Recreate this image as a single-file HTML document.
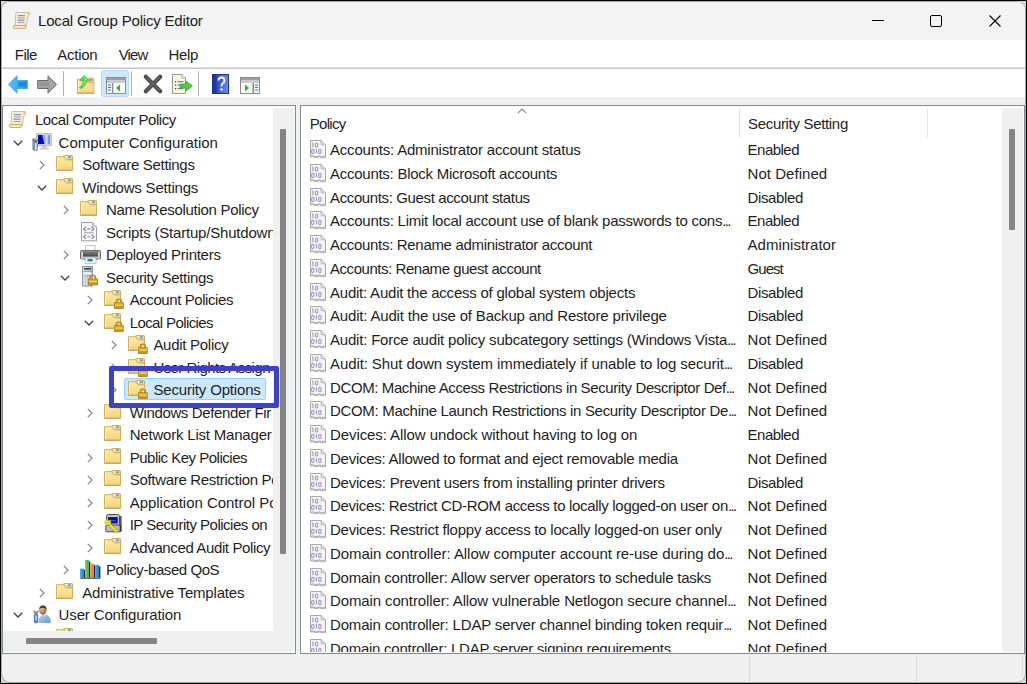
<!DOCTYPE html><html><head><meta charset="utf-8"><style>

*{box-sizing:border-box}
html,body{margin:0;padding:0;width:1027px;height:684px;overflow:hidden;background:#000}
.t{position:absolute;font-family:"Liberation Sans", sans-serif;font-size:15px;line-height:20px;color:#1e1e1e;white-space:nowrap}
.ic{position:absolute;overflow:visible}
.abs{position:absolute}
.el{letter-spacing:-1.6px}
#win{position:absolute;left:1px;top:1px;width:1025px;height:682px;background:#f0f0f0;border-radius:9px;overflow:hidden;border:1px solid #a6a6a6}

</style></head><body>

<svg width="0" height="0" style="position:absolute">
<defs>
 <linearGradient id="gFold" x1="0" y1="0" x2="0" y2="1"><stop offset="0" stop-color="#fdeaa6"/><stop offset="1" stop-color="#f3d47c"/></linearGradient>
 <linearGradient id="gLock" x1="0" y1="0" x2="0" y2="1"><stop offset="0" stop-color="#e0b838"/><stop offset="1" stop-color="#b88c1c"/></linearGradient>
 <linearGradient id="gScroll" x1="0" y1="0" x2="1" y2="0"><stop offset="0" stop-color="#f6f0d8"/><stop offset="1" stop-color="#fbefb2"/></linearGradient>
 <linearGradient id="gBlue" x1="0" y1="0" x2="1" y2="1"><stop offset="0" stop-color="#0000c8"/><stop offset=".45" stop-color="#0a22d8"/><stop offset=".55" stop-color="#b8c8ff"/><stop offset="1" stop-color="#3a5cf0"/></linearGradient>
 <linearGradient id="gArrowB" x1="0" y1="0" x2="1" y2="0"><stop offset="0" stop-color="#5cc4ff"/><stop offset=".5" stop-color="#34b0f8"/><stop offset="1" stop-color="#2a8ee0"/></linearGradient>
 <linearGradient id="gArrowG" x1="0" y1="0" x2="0" y2="1"><stop offset="0" stop-color="#a8a8a8"/><stop offset="1" stop-color="#6a6a6a"/></linearGradient>
 <linearGradient id="gHelp" x1="0" y1="0" x2="1" y2="0"><stop offset="0" stop-color="#2840a8"/><stop offset=".3" stop-color="#3450c0"/><stop offset="1" stop-color="#6c8cf0"/></linearGradient>
 <linearGradient id="gScreen" x1="0" y1="0" x2="1" y2="0"><stop offset="0" stop-color="#1020e0"/><stop offset=".5" stop-color="#8aa0ff"/><stop offset=".75" stop-color="#d8e0ff"/><stop offset="1" stop-color="#4060f0"/></linearGradient>
 <linearGradient id="gPrn" x1="0" y1="0" x2="0" y2="1"><stop offset="0" stop-color="#808080"/><stop offset="1" stop-color="#484848"/></linearGradient>
 <linearGradient id="gTower" x1="0" y1="0" x2="1" y2="0"><stop offset="0" stop-color="#dfe6ea"/><stop offset="1" stop-color="#a9b3ba"/></linearGradient>
 <linearGradient id="gBarB" x1="0" y1="0" x2="1" y2="0"><stop offset="0" stop-color="#48b4f8"/><stop offset="1" stop-color="#1a78d0"/></linearGradient>
 <linearGradient id="gBarG" x1="0" y1="0" x2="1" y2="0"><stop offset="0" stop-color="#7ee070"/><stop offset="1" stop-color="#30a838"/></linearGradient>
 <linearGradient id="gBarO" x1="0" y1="0" x2="1" y2="0"><stop offset="0" stop-color="#ffa070"/><stop offset="1" stop-color="#e86838"/></linearGradient>
 <linearGradient id="gShirt" x1="0" y1="0" x2="1" y2="1"><stop offset="0" stop-color="#b8dcf8"/><stop offset="1" stop-color="#5a98d8"/></linearGradient>
 <radialGradient id="gSkin" cx=".35" cy=".35" r=".7"><stop offset="0" stop-color="#f0c090"/><stop offset="1" stop-color="#9a6030"/></radialGradient>
</defs>
<symbol id="folder" viewBox="0 0 17 16">
 <path d="M0.5 1.7 H7.6 Q8.3 1.7 8.7 2.4 L9.6 4.1 Q10 4.7 10.8 4.7 H16.5 V15.5 H0.5 Z" fill="url(#gFold)" stroke="#d0ae5c" stroke-width="1"/>
 <path d="M7.4 1.3 Q7.5 0.5 8.4 0.5 H15.8 Q16.5 0.5 16.5 1.2 V4.7 H10.8 Q10 4.7 9.6 4.1 L8.7 2.4 Q8.3 1.7 7.6 1.7 Z" fill="#f2da94" stroke="#cfac5a" stroke-width="1"/>
 <rect x="9.8" y="1.3" width="1.8" height="1.9" fill="#fbf8ee"/>
 <rect x="11.8" y="1.3" width="3.2" height="1.9" fill="#6fa2d8"/>
 <rect x="1" y="2.2" width="1" height="12.8" fill="#fff4c4" opacity=".8"/>
 <rect x="0.5" y="14.6" width="16" height="1" fill="#c9a458"/>
</symbol>
<symbol id="lock" viewBox="0 0 10 11">
 <path d="M2.6 5 V3.3 Q2.6 0.9 5 0.9 Q7.4 0.9 7.4 3.3 V5" fill="none" stroke="#b48c2c" stroke-width="1.9"/>
 <path d="M3.3 5 V3.4 Q3.3 1.7 5 1.7 Q6.7 1.7 6.7 3.4 V5" fill="none" stroke="#e2c470" stroke-width="0.5"/>
 <rect x="0.4" y="4.6" width="9.2" height="6" fill="url(#gLock)" stroke="#a87c14" stroke-width="0.8"/>
 <rect x="0.8" y="6.6" width="8.4" height="1.1" fill="#f6dc60"/>
 <rect x="0.8" y="9" width="8.4" height="0.9" fill="#c89a22"/>
</symbol>
<symbol id="scroll" viewBox="0 0 19 19">
 <path d="M4 1.5 H16.5 Q18.5 1.5 17.5 3.5 L16.5 3.5 L14 15 H3 Z" fill="url(#gScroll)" stroke="#c8c0a0" stroke-width="1"/>
 <path d="M15.5 1 Q18.5 1 17.6 3.6 Q16.5 4 15.6 3.2 Z" fill="#e2c46a"/>
 <rect x="6" y="4" width="7" height="1.2" fill="#8890c8"/>
 <rect x="6" y="6.3" width="7" height="1.2" fill="#a8a8b8"/>
 <rect x="5.5" y="8.6" width="7" height="1.2" fill="#8890c8"/>
 <rect x="5.5" y="10.9" width="7" height="1.2" fill="#a8a8b8"/>
 <path d="M1.5 14.5 Q0.5 16.8 2 17.5 H12.5 Q13.8 17.5 14 16 L14.2 14.5 Z" fill="#f0dc98" stroke="#cbb070" stroke-width="1"/>
 <rect x="2" y="15.3" width="10" height="1.2" fill="#fff4c8"/>
</symbol>
<symbol id="bin" viewBox="0 0 16 19">
 <path d="M0.5 0.5 H11.2 L15.5 4.8 V17.8 Q14.5 16.8 13.2 17.6 Q12 18.6 10.6 17.4 Q9.2 16.5 7.8 17.3 Q5.5 18.4 3.8 17 Q2.5 16.2 0.5 17 Z" fill="#f4f4f4" stroke="#a8a8a8" stroke-width="1"/>
 <path d="M1 16.2 Q2.8 15.4 4.2 16.3 Q6 17.4 8 16.4 Q9.5 15.6 11 16.5 Q12.2 17.4 13.4 16.6 Q14.5 16 15 16.6" fill="none" stroke="#b4b4b4" stroke-width="1.2"/>
 <path d="M11.2 0.5 V4.8 H15.5" fill="#e0e0e0" stroke="#b0b0b0" stroke-width="0.9"/>
 <g fill="none" stroke="#9c9ac6" stroke-width="1.1">
  <path d="M2.9 2.9 V7.2 M2.1 3.1 L2.9 2.9"/>
  <ellipse cx="6.6" cy="5.05" rx="1.3" ry="2.1"/>
  <ellipse cx="2.8" cy="11.5" rx="1.3" ry="2.1"/>
  <path d="M6.5 9.4 V13.6 M5.7 9.6 L6.5 9.4"/>
  <ellipse cx="9.9" cy="11.5" rx="1.3" ry="2.1"/>
 </g>
</symbol>
<symbol id="chevR" viewBox="0 0 6 10"><path d="M0.8 0.8 L5 5 L0.8 9.2" fill="none" stroke="#858585" stroke-width="1.2"/></symbol>
<symbol id="chevD" viewBox="0 0 10 6"><path d="M0.8 0.8 L5 5 L9.2 0.8" fill="none" stroke="#404040" stroke-width="1.3"/></symbol>
</svg>

<div class="abs" style="left:1px;top:1px;width:1025px;height:682px;background:#d6d6d6"></div>
<div id="win">
</div>
<div class="abs" style="left:0;top:0;width:1027px;height:684px;overflow:hidden">
<div class="abs" style="left:2px;top:2px;width:1023px;height:38px;background:#f3f3f3;border-radius:8px 8px 0 0"></div>
<svg class="ic" style="left:12.00px;top:11.00px" width="19" height="19" viewBox="0 0 19 19"><use href="#scroll" width="19" height="19"/></svg>
<div class="t" style="left:38.00px;top:11.00px;letter-spacing:-0.186px;color:#1a1a1a;">Local Group Policy Editor</div>
<div class="abs" style="left:872px;top:20px;width:12px;height:1px;background:#000"></div>
<div class="abs" style="left:930px;top:15px;width:12px;height:12px;border:1px solid #000;border-radius:2px"></div>
<svg class="ic" style="left:989px;top:15px" width="12" height="12"><path d="M0.5 0.5 L11.5 11.5 M11.5 0.5 L0.5 11.5" stroke="#000" stroke-width="1.1"/></svg>
<div class="abs" style="left:2px;top:40px;width:1023px;height:28px;background:#fff"></div>
<div class="t" style="left:14.80px;top:45.00px;letter-spacing:-0.543px;">File</div>
<div class="t" style="left:57.30px;top:45.00px;letter-spacing:-0.269px;">Action</div>
<div class="t" style="left:118.70px;top:45.00px;letter-spacing:-0.870px;">View</div>
<div class="t" style="left:168.40px;top:45.00px;letter-spacing:-0.336px;">Help</div>
<div class="abs" style="left:2px;top:67px;width:1023px;height:1px;background:#e2e2e2"></div>
<div class="abs" style="left:2px;top:68px;width:1023px;height:1px;background:#c6c6c6"></div>
<div class="abs" style="left:2px;top:69px;width:1023px;height:28px;background:#fff"></div>
<div class="abs" style="left:101px;top:70px;width:28px;height:27px;background:#cce8ff;border:1px solid #b3d9fa;border-radius:3px"></div>
<div class="abs" style="left:63.0px;top:71px;width:1px;height:25px;background:#b4b4b4"></div>
<div class="abs" style="left:130.8px;top:71px;width:1px;height:25px;background:#b4b4b4"></div>
<div class="abs" style="left:198.1px;top:71px;width:1px;height:25px;background:#b4b4b4"></div>
<svg class="ic" style="left:8px;top:75px" width="20" height="19" viewBox="0 0 20 19"><path d="M0.5 9.5 L9 0.8 V5.5 H19.3 V13.5 H9 V18.2 Z" fill="url(#gArrowB)" stroke="#48a0e0" stroke-width="0.9"/><path d="M10 7 H18 V11.5 H10 Z" fill="#0a78d0" opacity=".55"/></svg>
<svg class="ic" style="left:37px;top:75px" width="20" height="19" viewBox="0 0 20 19"><path d="M19.5 9.5 L11 0.8 V5.5 H0.7 V13.5 H11 V18.2 Z" fill="#a4a4a4" stroke="#6c6c6c" stroke-width="1"/><path d="M2 7 H12 V11 H2 Z" fill="#8c8c8c" opacity=".6"/></svg>
<svg class="ic" style="left:77px;top:75px" width="18" height="19" viewBox="0 0 18 19"><use href="#folder" x="0" y="2.5" width="17.5" height="16.5"/><path d="M7 0.4 L12.2 5.4 H9.4 Q9.2 10.8 3.6 13.6 L2.6 12.4 Q6.6 9.8 6.2 5.4 H2.8 Z" fill="#52dc4a" stroke="#2a9e2a" stroke-width="0.6"/><path d="M7 1.6 L9.8 4.6 H8.4 Q8.2 8 5.6 10.4" fill="none" stroke="#9cf890" stroke-width="0.9"/></svg>
<svg class="ic" style="left:106px;top:77px" width="20" height="17" viewBox="0 0 20 17"><rect x="0.5" y="0.5" width="19" height="16" fill="#e8e8e8" stroke="#8c8c8c"/><rect x="1" y="1" width="18" height="2" fill="#9aa0a8"/><rect x="1" y="3" width="18" height="3" fill="#c8ccd0"/><rect x="1" y="6" width="5" height="10" fill="#f4f4f4"/><rect x="6" y="6" width="1.5" height="10" fill="#8c8c8c"/><rect x="7.5" y="6" width="11.5" height="10" fill="#f8f8f8"/><rect x="2" y="7.5" width="3" height="1" fill="#3a7ac8"/><rect x="2" y="10" width="3" height="1" fill="#3a7ac8"/><rect x="2" y="12.5" width="3" height="1" fill="#3a7ac8"/><path d="M14 7.5 L10 11 L14 14.5 Z" fill="#38b030"/></svg>
<svg class="ic" style="left:143px;top:74px" width="20" height="20" viewBox="0 0 20 20"><path d="M2.8 2.8 L17.2 17.2 M17.2 2.8 L2.8 17.2" stroke="#4a4a4a" stroke-width="4.2" stroke-linecap="round"/><path d="M3.5 3.2 L16.5 16.2 M16.5 3.2 L3.5 16.2" stroke="#7a7a7a" stroke-width="1.2" stroke-linecap="round" opacity=".7"/></svg>
<svg class="ic" style="left:172px;top:74px" width="21" height="20" viewBox="0 0 21 20"><path d="M0.5 0.5 H10 L13.5 4 V19.5 H0.5 Z" fill="#fdf6dc" stroke="#9a9a9a"/><path d="M10 0.5 V4 H13.5" fill="#fff" stroke="#a0a0a0"/><rect x="3" y="7" width="1.2" height="1.2" fill="#404040"/><rect x="5.5" y="7" width="6" height="1.2" fill="#7080b0"/><rect x="3" y="10.5" width="1.2" height="1.2" fill="#404040"/><rect x="5.5" y="10.5" width="6" height="1.2" fill="#7080b0"/><rect x="3" y="14" width="1.2" height="1.2" fill="#404040"/><rect x="5.5" y="14" width="6" height="1.2" fill="#7080b0"/><path d="M8 10 H14 V7 L20.5 12 L14 17 V14 H8 Z" fill="#4ccc40" stroke="#2a9a2a" stroke-width="0.6"/></svg>
<svg class="ic" style="left:212px;top:74px" width="17" height="20" viewBox="0 0 17 20"><rect x="0.5" y="0.5" width="16" height="19" fill="url(#gHelp)" stroke="#1c3290"/><rect x="1" y="1" width="3.5" height="18" fill="#2038a0"/><path d="M6.5 6.5 Q6.5 3.5 9.5 3.5 Q12.5 3.5 12.5 6.5 Q12.5 8.5 10.3 9.8 Q9.5 10.5 9.5 12.5" fill="none" stroke="#fff" stroke-width="1.8"/><circle cx="9.5" cy="15.5" r="1.3" fill="#fff"/></svg>
<svg class="ic" style="left:240px;top:77px" width="20" height="17" viewBox="0 0 20 17"><rect x="0.5" y="0.5" width="19" height="16" fill="#e8e8e8" stroke="#8c8c8c"/><rect x="1" y="1" width="18" height="2" fill="#9aa0a8"/><rect x="1" y="3" width="18" height="3" fill="#c8ccd0"/><rect x="1" y="6" width="11.5" height="10" fill="#f8f8f8"/><rect x="12.5" y="6" width="1.5" height="10" fill="#8c8c8c"/><rect x="14" y="6" width="5" height="10" fill="#f4f4f4"/><rect x="15" y="7.5" width="3" height="1" fill="#3a7ac8"/><rect x="15" y="10" width="3" height="1" fill="#3a7ac8"/><rect x="15" y="12.5" width="3" height="1" fill="#3a7ac8"/><path d="M5 7.5 L9 11 L5 14.5 Z" fill="#38b030"/></svg>
<div class="abs" style="left:2px;top:105px;width:294px;height:549px;border:1px solid #848a94;background:#fff"></div>
<div class="abs" style="left:3px;top:106px;width:270px;height:525px;overflow:hidden">
<div class="abs" style="left:121px;top:271.5px;width:142.2px;height:22.7px;background:#cce8ff;border:1px solid #99d1ff;border-radius:2px"></div>
<svg class="ic" style="left:4.90px;top:4.00px" width="19" height="19" viewBox="0 0 19 19"><use href="#scroll" width="19" height="19"/></svg><div class="t" style="left:31.90px;top:4.00px;letter-spacing:-0.433px;">Local Computer Policy</div><svg class="ic" style="left:10.0px;top:33.6px" width="10" height="6"><use href="#chevD"/></svg><svg class="ic" style="left:28.80px;top:26.50px" width="22" height="20" viewBox="0 0 22 20"><g transform="translate(-2.1,-1.9)"><rect x="2.3" y="7.2" width="4" height="12" rx="1.3" fill="#a4a4a4"/><rect x="6.4" y="2.3" width="15.3" height="12.4" fill="#d6d3c9" stroke="#b5b2a6" stroke-width="0.7"/><rect x="8.2" y="4" width="11.6" height="9" fill="url(#gScreen)"/><path d="M8.2 4 H12 L14.5 13 H8.2 Z" fill="#0008c8"/><rect x="12" y="14.7" width="4.5" height="1.8" fill="#bdbdb5"/><rect x="10" y="16.4" width="9" height="2.2" fill="#d2d2ca"/><path d="M3 8.5 L5.5 11 L8 8.5" fill="none" stroke="#6a6a6a" stroke-width="1.3"/><rect x="4.2" y="11.2" width="3.2" height="8.2" rx="1.5" fill="#c8ecff" stroke="#3a64b0" stroke-width="0.9"/></g></svg><div class="t" style="left:55.60px;top:27.00px;letter-spacing:0.004px;">Computer Configuration</div><svg class="ic" style="left:36.4px;top:54.1px" width="6" height="10"><use href="#chevR"/></svg><svg class="ic" style="left:53.00px;top:49.00px" width="17" height="16" viewBox="0 0 17 16"><use href="#folder" width="17" height="16"/></svg><div class="t" style="left:79.30px;top:49.00px;letter-spacing:-0.310px;">Software Settings</div><svg class="ic" style="left:33.7px;top:78.6px" width="10" height="6"><use href="#chevD"/></svg><svg class="ic" style="left:53.00px;top:71.50px" width="17" height="16" viewBox="0 0 17 16"><use href="#folder" width="17" height="16"/></svg><div class="t" style="left:79.30px;top:72.00px;letter-spacing:-0.214px;">Windows Settings</div><svg class="ic" style="left:60.1px;top:99.1px" width="6" height="10"><use href="#chevR"/></svg><svg class="ic" style="left:76.90px;top:94.00px" width="17" height="16" viewBox="0 0 17 16"><use href="#folder" width="17" height="16"/></svg><div class="t" style="left:103.00px;top:94.00px;letter-spacing:-0.297px;">Name Resolution Policy</div><svg class="ic" style="left:78.20px;top:116.10px" width="16" height="20" viewBox="0 0 16 20"><path d="M0.5 0.5 H11.5 L15.5 4.5 V18.8 H0.5 Z" fill="#f7f7f7" stroke="#9c9c9c"/><path d="M11.5 0.5 V4.5 H15.5" fill="#e8e8e8" stroke="#b4b4b4"/><path d="M5 4.8 L2.6 6.9 L5 9 M10.5 4.8 L12.9 6.9 L10.5 9 M6.2 6.9 H9.3" fill="none" stroke="#7c7ca4" stroke-width="1.1"/><rect x="3" y="10.3" width="9.5" height="1" fill="#9a9ac4"/><path d="M5 12.6 L2.6 14.7 L5 16.8 M10.5 12.6 L12.9 14.7 L10.5 16.8 M6.2 14.7 H9.3" fill="none" stroke="#7c7ca4" stroke-width="1.1"/></svg><div class="t" style="left:103.00px;top:117.00px;letter-spacing:-0.195px;">Scripts (Startup/Shutdown</div><svg class="ic" style="left:60.1px;top:144.1px" width="6" height="10"><use href="#chevR"/></svg><svg class="ic" style="left:76.60px;top:139.00px" width="21" height="19" viewBox="0 0 21 19"><rect x="5.5" y="0.5" width="9.5" height="6" fill="#fbfbfb" stroke="#c4c4c4"/><rect x="0.5" y="5.5" width="20" height="8.5" rx="1" fill="#9a9a9a" stroke="#6c6c6c"/><rect x="2.5" y="6.5" width="16" height="5" fill="url(#gPrn)"/><rect x="1.3" y="7" width="1.6" height="5" fill="#d8dde2"/><rect x="18.1" y="7" width="1.6" height="5" fill="#d8dde2"/><rect x="1" y="11.8" width="19" height="2" fill="#c6c6c6"/><rect x="4" y="13.5" width="13" height="1" fill="#202020"/><rect x="5" y="13" width="11" height="5.5" fill="#eef4fb" stroke="#b9c9da"/><rect x="7.5" y="14" width="2.5" height="2.5" fill="#2a88e0"/><rect x="10" y="14" width="2.5" height="2.5" fill="#1a9a40"/></svg><div class="t" style="left:103.00px;top:139.00px;letter-spacing:-0.270px;">Deployed Printers</div><svg class="ic" style="left:57.4px;top:168.6px" width="10" height="6"><use href="#chevD"/></svg><svg class="ic" style="left:79.20px;top:160.00px" width="17" height="21" viewBox="0 0 17 21"><rect x="0.5" y="0.5" width="10" height="19.5" fill="url(#gTower)" stroke="#8c969e"/><rect x="2" y="2" width="7" height="1.6" fill="#1e4e58"/><rect x="1.5" y="5" width="8" height="1" fill="#9aa4aa"/><rect x="1.5" y="6.3" width="8" height="2" fill="#f6f9fa"/><rect x="1.5" y="9.5" width="8" height="0.8" fill="#9aa4aa"/><use href="#lock" x="6" y="8.3" width="10" height="11.3"/></svg><div class="t" style="left:103.00px;top:162.00px;letter-spacing:-0.316px;">Security Settings</div><svg class="ic" style="left:83.8px;top:189.1px" width="6" height="10"><use href="#chevR"/></svg><svg class="ic" style="left:100.80px;top:184.00px" width="21" height="20" viewBox="0 0 21 20"><use href="#folder" width="17" height="16"/><use href="#lock" x="9.9" y="8.3" width="10" height="10.6"/></svg><div class="t" style="left:126.70px;top:184.00px;letter-spacing:-0.424px;">Account Policies</div><svg class="ic" style="left:81.1px;top:213.6px" width="10" height="6"><use href="#chevD"/></svg><svg class="ic" style="left:100.80px;top:206.50px" width="21" height="20" viewBox="0 0 21 20"><use href="#folder" width="17" height="16"/><use href="#lock" x="9.9" y="8.3" width="10" height="10.6"/></svg><div class="t" style="left:126.70px;top:207.00px;letter-spacing:-0.609px;">Local Policies</div><svg class="ic" style="left:107.5px;top:234.1px" width="6" height="10"><use href="#chevR"/></svg><svg class="ic" style="left:124.70px;top:229.00px" width="21" height="20" viewBox="0 0 21 20"><use href="#folder" width="17" height="16"/><use href="#lock" x="9.9" y="8.3" width="10" height="10.6"/></svg><div class="t" style="left:150.40px;top:229.00px;letter-spacing:-0.279px;">Audit Policy</div><svg class="ic" style="left:107.5px;top:256.6px" width="6" height="10"><use href="#chevR"/></svg><svg class="ic" style="left:124.70px;top:251.50px" width="21" height="20" viewBox="0 0 21 20"><use href="#folder" width="17" height="16"/><use href="#lock" x="9.9" y="8.3" width="10" height="10.6"/></svg><div class="t" style="left:150.40px;top:252.00px;letter-spacing:-0.566px;">User Rights Assign</div><svg class="ic" style="left:107.5px;top:279.1px" width="6" height="10"><use href="#chevR"/></svg><svg class="ic" style="left:124.70px;top:274.00px" width="21" height="20" viewBox="0 0 21 20"><use href="#folder" width="17" height="16"/><use href="#lock" x="9.9" y="8.3" width="10" height="10.6"/></svg><div class="t" style="left:150.40px;top:274.00px;letter-spacing:-0.176px;">Security Options</div><svg class="ic" style="left:83.8px;top:301.6px" width="6" height="10"><use href="#chevR"/></svg><svg class="ic" style="left:100.80px;top:296.50px" width="17" height="16" viewBox="0 0 17 16"><use href="#folder" width="17" height="16"/></svg><div class="t" style="left:126.70px;top:297.00px;letter-spacing:-0.362px;">Windows Defender Fir</div><svg class="ic" style="left:100.80px;top:319.00px" width="17" height="16" viewBox="0 0 17 16"><use href="#folder" width="17" height="16"/></svg><div class="t" style="left:126.70px;top:319.00px;letter-spacing:-0.200px;">Network List Manager</div><svg class="ic" style="left:83.8px;top:346.6px" width="6" height="10"><use href="#chevR"/></svg><svg class="ic" style="left:100.80px;top:341.50px" width="17" height="16" viewBox="0 0 17 16"><use href="#folder" width="17" height="16"/></svg><div class="t" style="left:126.70px;top:342.00px;letter-spacing:-0.496px;">Public Key Policies</div><svg class="ic" style="left:83.8px;top:369.1px" width="6" height="10"><use href="#chevR"/></svg><svg class="ic" style="left:100.80px;top:364.00px" width="17" height="16" viewBox="0 0 17 16"><use href="#folder" width="17" height="16"/></svg><div class="t" style="left:126.70px;top:364.00px;letter-spacing:-0.309px;">Software Restriction Po</div><svg class="ic" style="left:83.8px;top:391.6px" width="6" height="10"><use href="#chevR"/></svg><svg class="ic" style="left:100.80px;top:386.50px" width="17" height="16" viewBox="0 0 17 16"><use href="#folder" width="17" height="16"/></svg><div class="t" style="left:126.70px;top:387.00px;letter-spacing:-0.026px;">Application Control Po</div><svg class="ic" style="left:83.8px;top:414.1px" width="6" height="10"><use href="#chevR"/></svg><svg class="ic" style="left:100.70px;top:408.40px" width="20" height="20" viewBox="0 0 20 20"><rect x="2.5" y="0.5" width="13" height="11" rx="2" fill="#c4c4c4" stroke="#4c4c4c"/><rect x="4.6" y="3.4" width="8.6" height="5.6" fill="#0000e4" stroke="#181818" stroke-width="0.8"/><rect x="6.5" y="6.4" width="5.5" height="0.9" fill="#28a0a0"/><rect x="1.8" y="11" width="15" height="6.8" rx="1" fill="#bcbcbc" stroke="#4c4c4c"/><rect x="15.6" y="2" width="2" height="15.5" fill="#2a2a2a" opacity=".8"/><path d="M5.5 10.5 L12.8 17.8" stroke="#a89800" stroke-width="2.8" stroke-linecap="round"/><path d="M5.5 10.5 L12.8 17.8" stroke="#f6ec20" stroke-width="1.8" stroke-linecap="round"/><path d="M0.6 8.2 L2.6 5.4 L4.4 6.6 L6.6 6 L6.8 8.6 L5.8 11 L3 11.2 Z" fill="#f6ec20" stroke="#a89800" stroke-width="0.6"/><ellipse cx="3.8" cy="8.4" rx="1.1" ry="0.7" fill="#b0b0b0"/></svg><div class="t" style="left:126.70px;top:409.00px;letter-spacing:-0.504px;">IP Security Policies on</div><svg class="ic" style="left:83.8px;top:436.6px" width="6" height="10"><use href="#chevR"/></svg><svg class="ic" style="left:100.80px;top:431.50px" width="17" height="16" viewBox="0 0 17 16"><use href="#folder" width="17" height="16"/></svg><div class="t" style="left:126.70px;top:432.00px;letter-spacing:-0.378px;">Advanced Audit Policy</div><svg class="ic" style="left:60.1px;top:459.1px" width="6" height="10"><use href="#chevR"/></svg><svg class="ic" style="left:76.60px;top:454.30px" width="22" height="19" viewBox="0 0 22 19"><rect x="3.8" y="9.7" width="1.5" height="8" fill="#1a2a38"/><rect x="8.8" y="1.5" width="1.5" height="16.2" fill="#1a2a38"/><rect x="13.9" y="5.2" width="1.5" height="12.5" fill="#1a2a38"/><rect x="18.9" y="6.5" width="1.5" height="11.2" fill="#1a2a38"/><rect x="0" y="8.7" width="3.8" height="9" fill="url(#gBarB)"/><rect x="5" y="0" width="3.8" height="17.7" fill="url(#gBarG)"/><rect x="10.1" y="3.7" width="3.8" height="14" fill="url(#gBarO)"/><rect x="15.1" y="5" width="3.8" height="12.7" fill="url(#gBarB)"/><rect x="0.5" y="17.7" width="20" height="1" fill="#303438"/></svg><div class="t" style="left:103.00px;top:454.00px;letter-spacing:-0.430px;">Policy-based QoS</div><svg class="ic" style="left:36.4px;top:481.6px" width="6" height="10"><use href="#chevR"/></svg><svg class="ic" style="left:53.00px;top:476.50px" width="17" height="16" viewBox="0 0 17 16"><use href="#folder" width="17" height="16"/></svg><div class="t" style="left:79.30px;top:477.00px;letter-spacing:-0.188px;">Administrative Templates</div><svg class="ic" style="left:10.0px;top:506.1px" width="10" height="6"><use href="#chevD"/></svg><svg class="ic" style="left:29.80px;top:498.80px" width="19" height="19" viewBox="0 0 19 19"><path d="M5.5 18 Q5.2 10.5 11.5 9 Q17.8 10 17.8 18 Z" fill="url(#gShirt)"/><path d="M10.6 9.2 L11.5 12 L12.4 9.2 Z" fill="#f4f8fc"/><ellipse cx="9.8" cy="5.2" rx="3.6" ry="4.6" fill="url(#gSkin)"/><path d="M6.2 4.2 Q6.5 0.5 10 0.5 Q13.8 0.6 13.6 5 Q12.5 2.6 9.5 2.8 Q7.2 3 6.2 4.2 Z" fill="#3c3a38"/><path d="M0.8 5.2 Q0.5 8.5 2.8 9.2 Q5.5 8.8 5.4 5.2 L4.3 6.8 H2 Z" fill="#9a9a9a" stroke="#6a6a6a" stroke-width="0.5"/><rect x="1.2" y="9" width="3.6" height="9" rx="1.6" fill="#5a7ec0" stroke="#3a5aa0" stroke-width="0.6"/><rect x="2.4" y="10.5" width="1.2" height="5" fill="#d8f0ff"/></svg><div class="t" style="left:55.60px;top:499.00px;letter-spacing:-0.142px;">User Configuration</div><svg class="ic" style="left:36.4px;top:526.6px" width="6" height="10"><use href="#chevR"/></svg><svg class="ic" style="left:53.00px;top:521.50px" width="17" height="16" viewBox="0 0 17 16"><use href="#folder" width="17" height="16"/></svg><div class="t" style="left:79.30px;top:522.00px;letter-spacing:-0.300px;">Software Settings</div>
</div>
<div class="abs" style="left:273px;top:108px;width:21px;height:523px;background:#f0f0f0"></div>
<div class="abs" style="left:280px;top:129px;width:6px;height:425px;background:#858585;border-radius:1px"></div>
<div class="abs" style="left:3px;top:631px;width:291px;height:21px;background:#f0f0f0"></div>
<div class="abs" style="left:26px;top:638px;width:131px;height:6px;background:#858585;border-radius:1px"></div>
<div class="abs" style="left:108.6px;top:365.8px;width:170.3px;height:42.1px;border:5px solid #3c41c8;border-radius:2px"></div>
<div class="abs" style="left:300px;top:105px;width:725px;height:549px;border:1px solid #848a94;background:#fff"></div>
<div class="abs" style="left:1002px;top:108px;width:21px;height:544px;background:#f0f0f0"></div>
<div class="abs" style="left:1009px;top:129px;width:6px;height:101px;background:#858585;border-radius:1px"></div>
<div class="t" style="left:309.80px;top:114.00px;letter-spacing:-0.702px;">Policy</div>
<div class="t" style="left:748.00px;top:114.00px;letter-spacing:-0.321px;">Security Setting</div>
<div class="abs" style="left:739px;top:108px;width:1px;height:30px;background:#e5e5e5"></div>
<div class="abs" style="left:927px;top:108px;width:1px;height:30px;background:#e5e5e5"></div>
<svg class="ic" style="left:517px;top:108px" width="10" height="6"><path d="M0.8 5.2 L5 1 L9.2 5.2" fill="none" stroke="#8a8a8a" stroke-width="1.1"/></svg>
<div class="abs" style="left:301px;top:138px;width:701px;height:514px;overflow:hidden">
<svg class="ic" style="left:9px;top:2.1px" width="16" height="19"><use href="#bin"/></svg><div class="t" style="left:29.00px;top:2.00px;letter-spacing:-0.208px;">Accounts: Administrator account status</div><div class="t" style="left:446.60px;top:2.00px;letter-spacing:-0.518px;">Enabled</div><svg class="ic" style="left:9px;top:25.8px" width="16" height="19"><use href="#bin"/></svg><div class="t" style="left:29.00px;top:26.00px;letter-spacing:-0.261px;">Accounts: Block Microsoft accounts</div><div class="t" style="left:446.60px;top:26.00px;letter-spacing:0.033px;">Not Defined</div><svg class="ic" style="left:9px;top:49.6px" width="16" height="19"><use href="#bin"/></svg><div class="t" style="left:29.00px;top:50.00px;letter-spacing:-0.374px;">Accounts: Guest account status</div><div class="t" style="left:446.60px;top:50.00px;letter-spacing:-0.389px;">Disabled</div><svg class="ic" style="left:9px;top:73.3px" width="16" height="19"><use href="#bin"/></svg><div class="t" style="left:29.00px;top:73.00px;letter-spacing:-0.245px;">Accounts: Limit local account use of blank passwords to cons<span class="el">...</span></div><div class="t" style="left:446.60px;top:73.00px;letter-spacing:-0.518px;">Enabled</div><svg class="ic" style="left:9px;top:97.1px" width="16" height="19"><use href="#bin"/></svg><div class="t" style="left:29.00px;top:97.00px;letter-spacing:-0.320px;">Accounts: Rename administrator account</div><div class="t" style="left:446.60px;top:97.00px;letter-spacing:-0.005px;">Administrator</div><svg class="ic" style="left:9px;top:120.8px" width="16" height="19"><use href="#bin"/></svg><div class="t" style="left:29.00px;top:121.00px;letter-spacing:-0.449px;">Accounts: Rename guest account</div><div class="t" style="left:446.60px;top:121.00px;letter-spacing:-0.963px;">Guest</div><svg class="ic" style="left:9px;top:144.6px" width="16" height="19"><use href="#bin"/></svg><div class="t" style="left:29.00px;top:145.00px;letter-spacing:-0.226px;">Audit: Audit the access of global system objects</div><div class="t" style="left:446.60px;top:145.00px;letter-spacing:-0.389px;">Disabled</div><svg class="ic" style="left:9px;top:168.3px" width="16" height="19"><use href="#bin"/></svg><div class="t" style="left:29.00px;top:168.00px;letter-spacing:-0.179px;">Audit: Audit the use of Backup and Restore privilege</div><div class="t" style="left:446.60px;top:168.00px;letter-spacing:-0.389px;">Disabled</div><svg class="ic" style="left:9px;top:192.1px" width="16" height="19"><use href="#bin"/></svg><div class="t" style="left:29.00px;top:192.00px;letter-spacing:-0.197px;">Audit: Force audit policy subcategory settings (Windows Vista<span class="el">...</span></div><div class="t" style="left:446.60px;top:192.00px;letter-spacing:0.033px;">Not Defined</div><svg class="ic" style="left:9px;top:215.8px" width="16" height="19"><use href="#bin"/></svg><div class="t" style="left:29.00px;top:216.00px;letter-spacing:-0.093px;">Audit: Shut down system immediately if unable to log securit<span class="el">...</span></div><div class="t" style="left:446.60px;top:216.00px;letter-spacing:-0.389px;">Disabled</div><svg class="ic" style="left:9px;top:239.6px" width="16" height="19"><use href="#bin"/></svg><div class="t" style="left:29.00px;top:240.00px;letter-spacing:-0.391px;">DCOM: Machine Access Restrictions in Security Descriptor Def<span class="el">...</span></div><div class="t" style="left:446.60px;top:240.00px;letter-spacing:0.033px;">Not Defined</div><svg class="ic" style="left:9px;top:263.3px" width="16" height="19"><use href="#bin"/></svg><div class="t" style="left:29.00px;top:263.00px;letter-spacing:-0.320px;">DCOM: Machine Launch Restrictions in Security Descriptor De<span class="el">...</span></div><div class="t" style="left:446.60px;top:263.00px;letter-spacing:0.033px;">Not Defined</div><svg class="ic" style="left:9px;top:287.1px" width="16" height="19"><use href="#bin"/></svg><div class="t" style="left:29.00px;top:287.00px;letter-spacing:-0.082px;">Devices: Allow undock without having to log on</div><div class="t" style="left:446.60px;top:287.00px;letter-spacing:-0.518px;">Enabled</div><svg class="ic" style="left:9px;top:310.8px" width="16" height="19"><use href="#bin"/></svg><div class="t" style="left:29.00px;top:311.00px;letter-spacing:-0.253px;">Devices: Allowed to format and eject removable media</div><div class="t" style="left:446.60px;top:311.00px;letter-spacing:0.033px;">Not Defined</div><svg class="ic" style="left:9px;top:334.6px" width="16" height="19"><use href="#bin"/></svg><div class="t" style="left:29.00px;top:335.00px;letter-spacing:-0.221px;">Devices: Prevent users from installing printer drivers</div><div class="t" style="left:446.60px;top:335.00px;letter-spacing:-0.389px;">Disabled</div><svg class="ic" style="left:9px;top:358.3px" width="16" height="19"><use href="#bin"/></svg><div class="t" style="left:29.00px;top:358.00px;letter-spacing:-0.315px;">Devices: Restrict CD-ROM access to locally logged-on user on<span class="el">...</span></div><div class="t" style="left:446.60px;top:358.00px;letter-spacing:0.033px;">Not Defined</div><svg class="ic" style="left:9px;top:382.1px" width="16" height="19"><use href="#bin"/></svg><div class="t" style="left:29.00px;top:382.00px;letter-spacing:-0.231px;">Devices: Restrict floppy access to locally logged-on user only</div><div class="t" style="left:446.60px;top:382.00px;letter-spacing:0.033px;">Not Defined</div><svg class="ic" style="left:9px;top:405.9px" width="16" height="19"><use href="#bin"/></svg><div class="t" style="left:29.00px;top:406.00px;letter-spacing:-0.061px;">Domain controller: Allow computer account re-use during do<span class="el">...</span></div><div class="t" style="left:446.60px;top:406.00px;letter-spacing:0.033px;">Not Defined</div><svg class="ic" style="left:9px;top:429.6px" width="16" height="19"><use href="#bin"/></svg><div class="t" style="left:29.00px;top:430.00px;letter-spacing:-0.224px;">Domain controller: Allow server operators to schedule tasks</div><div class="t" style="left:446.60px;top:430.00px;letter-spacing:0.033px;">Not Defined</div><svg class="ic" style="left:9px;top:453.4px" width="16" height="19"><use href="#bin"/></svg><div class="t" style="left:29.00px;top:453.00px;letter-spacing:-0.120px;">Domain controller: Allow vulnerable Netlogon secure channel<span class="el">...</span></div><div class="t" style="left:446.60px;top:453.00px;letter-spacing:0.033px;">Not Defined</div><svg class="ic" style="left:9px;top:477.1px" width="16" height="19"><use href="#bin"/></svg><div class="t" style="left:29.00px;top:477.00px;letter-spacing:-0.172px;">Domain controller: LDAP server channel binding token requir<span class="el">...</span></div><div class="t" style="left:446.60px;top:477.00px;letter-spacing:0.033px;">Not Defined</div><svg class="ic" style="left:9px;top:500.9px" width="16" height="19"><use href="#bin"/></svg><div class="t" style="left:29.00px;top:501.00px;letter-spacing:-0.256px;">Domain controller: LDAP server signing requirements</div><div class="t" style="left:446.60px;top:501.00px;letter-spacing:0.033px;">Not Defined</div>
</div>
<div class="abs" style="left:749px;top:656px;width:1px;height:26px;background:#dadada"></div>
<div class="abs" style="left:916px;top:656px;width:1px;height:26px;background:#dadada"></div>
<div class="abs" style="left:1022px;top:656px;width:1px;height:26px;background:#dadada"></div>
</div>
</body></html>
